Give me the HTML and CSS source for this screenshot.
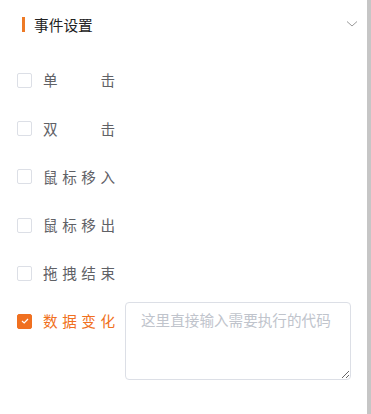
FILE: index.html
```html
<!DOCTYPE html>
<html lang="zh">
<head>
<meta charset="utf-8">
<link rel="stylesheet" href="styles.css">
</head>
<body>
<div class="page">
  <div class="panel">
    <div class="header">
      <span class="mark"></span>
      <span class="title">事件设置</span>
      <svg class="chevron" width="12" height="8" viewBox="0 0 12 8"><path d="M1 1.5 L6 6 L11 1.5" fill="none" stroke="#9a9a9a" stroke-width="1"/></svg>
    </div>
    <div class="list">
      <label class="row"><span class="box"></span><span class="text">单击</span></label>
      <label class="row"><span class="box"></span><span class="text">双击</span></label>
      <label class="row"><span class="box"></span><span class="text">鼠标移入</span></label>
      <label class="row"><span class="box"></span><span class="text">鼠标移出</span></label>
      <label class="row"><span class="box"></span><span class="text">拖拽结束</span></label>
      <div class="row row-data">
        <label class="check-on"><span class="box on"><svg width="10" height="8" viewBox="0 0 10 8"><path d="M2 4 L4.2 6 L8 2" fill="none" stroke="#fff" stroke-width="1.2"/></svg></span><span class="text">数据变化</span></label>
        <textarea class="code" placeholder="这里直接输入需要执行的代码"></textarea>
      </div>
    </div>
  </div>
  <div class="scroll"></div>
</div>
</body>
</html>
```
FILE: styles.css
```css
html, body {
  margin: 0;
  padding: 0;
  background: #fff;
}
body {
  font-family: "Noto Sans CJK SC", "Noto Sans", sans-serif;
}
.page {
  display: flex;
  width: 371px;
  height: 414px;
}
.panel {
  flex: 1;
}
.scroll {
  width: 4px;
  background: #c6c6c6;
}
.header {
  height: 48px;
  display: flex;
  align-items: center;
  padding-left: 22px;
  padding-right: 9px;
}
.mark {
  width: 3px;
  height: 15px;
  background: #ee7a26;
  margin-right: 9px;
}
.title {
  font-size: 14.7px;
  color: #222;
  flex: 1;
}
.chevron {
  display: block;
}
.list {
  padding-left: 17px;
  padding-top: 8.4px;
}
.row {
  height: 48.2px;
  display: flex;
  align-items: center;
}
.box {
  width: 13px;
  height: 13px;
  border: 1px solid #dcdfe6;
  border-radius: 2px;
  box-sizing: content-box;
  margin-right: 11px;
  display: flex;
  align-items: center;
  justify-content: center;
}
.box.on {
  background: #f07020;
  border-color: #f07020;
}
.text {
  width: 72px;
  font-size: 14.6px;
  color: #5f6166;
  text-align: justify;
  text-align-last: justify;
  line-height: 20px;
}
.row-data {
  align-items: flex-start;
  margin-top: 4.6px;
}
.check-on {
  display: flex;
  align-items: center;
  height: 39px;
}
.check-on .text {
  color: #f07020;
}
.code {
  margin-left: 10px;
  width: 226px;
  height: 78px;
  box-sizing: border-box;
  border: 1px solid #dcdfe6;
  border-radius: 4px;
  padding: 6px 15px;
  font-family: "Noto Sans CJK SC", "Noto Sans", sans-serif;
  font-size: 14.6px;
  line-height: 22px;
  color: #606266;
  resize: vertical;
  outline: none;
}
.code::placeholder {
  color: #c0c4cc;
}
```
